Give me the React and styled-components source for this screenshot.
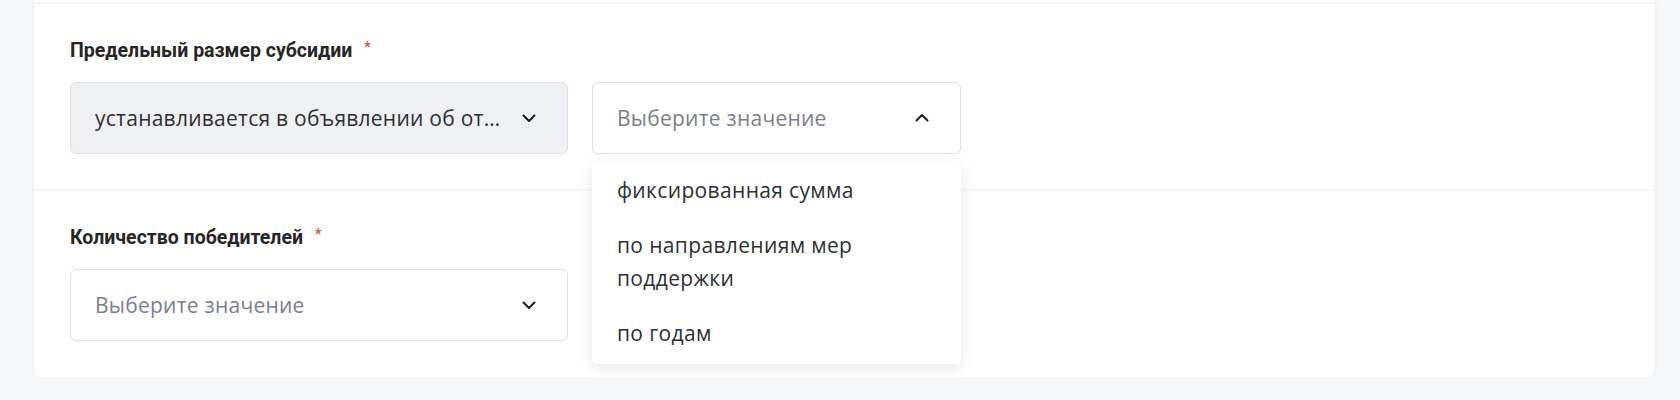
import React from 'react'
import styled, { createGlobalStyle } from 'styled-components'

const GlobalStyle = createGlobalStyle`
  html, body {
    margin: 0;
    padding: 0;
    background: #f6f7f9;
  }
  * {
    box-sizing: border-box;
  }
`

const Page = styled.div`
  padding: 0 25px 0 34px;
  font-family: 'Open Sans', 'Noto Sans', sans-serif;
`

const Card = styled.div`
  background: #ffffff;
  border-radius: 0 0 8px 8px;
  box-shadow: 0 1px 4px rgba(20, 30, 60, 0.06);
  padding-top: 2px;
`

const Section = styled.div`
  border-top: 2px solid #f4f5f7;
  padding: 35px 36px 35px;
  position: relative;
  z-index: ${props => props.raised ? 2 : 1};

  &:last-child {
    padding-bottom: 36px;
  }
`

const Label = styled.div`
  font-family: Roboto, 'Open Sans', sans-serif;
  font-weight: 700;
  font-size: 19.5px;
  line-height: 24px;
  height: 24px;
  color: #262626;
  margin-bottom: 19px;
`

const Required = styled.span`
  color: #d4572f;
  font-size: 14px;
  line-height: 0;
  margin-left: 12px;
  vertical-align: 5px;
`

const Row = styled.div`
  display: flex;
  gap: 24px;
  align-items: flex-start;
`

const SelectWrap = styled.div`
  position: relative;
  width: ${props => props.width}px;
`

const SelectBox = styled.div`
  height: 72px;
  display: flex;
  align-items: center;
  justify-content: space-between;
  padding: 0 28px 0 24px;
  border: 1px solid #dcdfe6;
  border-radius: 6px;
  background: ${props => props.filled ? '#eef0f4' : '#ffffff'};
`

const Value = styled.span`
  font-size: 21px;
  letter-spacing: 0.25px;
  color: ${props => props.placeholder ? '#7b808c' : '#2e2f33'};
  white-space: nowrap;
  overflow: hidden;
  text-overflow: ellipsis;
  min-width: 0;
`

const Chevron = styled.svg`
  flex: none;
  width: 20px;
  height: 20px;
  margin-left: 14px;
  transform: ${props => props.up ? 'rotate(180deg)' : 'none'};
`

const Menu = styled.div`
  position: absolute;
  top: calc(100% + 7px);
  left: 0;
  right: 0;
  background: #ffffff;
  border-radius: 6px;
  box-shadow: 0 4px 14px rgba(20, 30, 60, 0.1);
  padding: 2px 0 3px;
`

const Option = styled.div`
  padding: 11px 25px;
  font-size: 21px;
  letter-spacing: 0.35px;
  line-height: 33px;
  color: #2e2f33;
`

const ChevronIcon = ({ up }) => (
  <Chevron up={up} viewBox='0 0 20 20' fill='none'>
    <path d='M4.5 7.5L10 13L15.5 7.5' stroke='#1c1c1f' strokeWidth='2' strokeLinecap='round' strokeLinejoin='round' />
  </Chevron>
)

const Select = ({ width, value, placeholder, filled, open, options }) => (
  <SelectWrap width={width}>
    <SelectBox filled={filled}>
      <Value placeholder={!value}>{value || placeholder}</Value>
      <ChevronIcon up={open} />
    </SelectBox>
    {open && (
      <Menu>
        {options.map(o => <Option key={o}>{o}</Option>)}
      </Menu>
    )}
  </SelectWrap>
)

const App = () => (
  <Page>
    <GlobalStyle />
    <Card>
      <Section raised>
        <Label>Предельный размер субсидии<Required>*</Required></Label>
        <Row>
          <Select
            width={498}
            filled
            value='устанавливается в объявлении об отборе'
          />
          <Select
            width={369}
            placeholder='Выберите значение'
            open
            options={[
              'фиксированная сумма',
              'по направлениям мер поддержки',
              'по годам'
            ]}
          />
        </Row>
      </Section>
      <Section>
        <Label>Количество победителей<Required>*</Required></Label>
        <Row>
          <Select width={498} placeholder='Выберите значение' />
        </Row>
      </Section>
    </Card>
  </Page>
)

export default App
